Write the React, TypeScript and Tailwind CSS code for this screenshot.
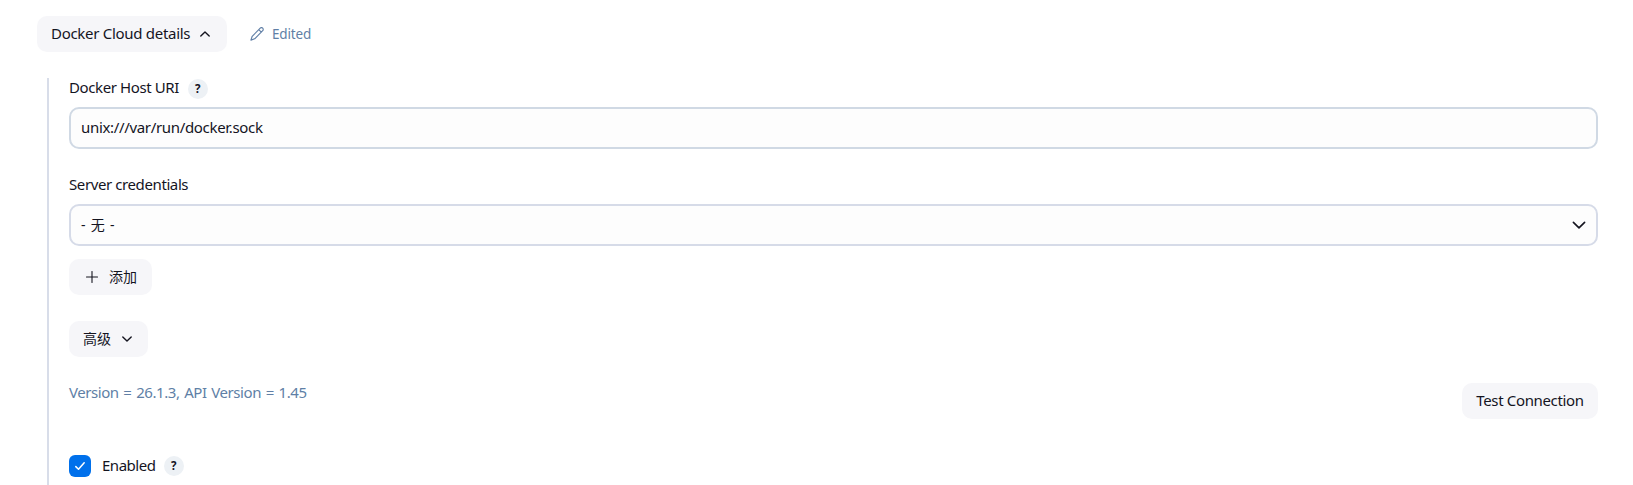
import React from "react";

const Chevron = ({ className, d }: { className: string; d: string }) => (
  <svg viewBox="0 0 12 12" className={className} fill="none" stroke="currentColor" strokeWidth="1.4" strokeLinecap="round" strokeLinejoin="round">
    <path d={d} />
  </svg>
);

const Help = ({ className }: { className: string }) => (
  <button className={`flex size-5 shrink-0 items-center justify-center rounded-full bg-[#edf1f5] pr-px text-[11.5px] leading-none font-bold ${className}`}>
    ?
  </button>
);

export default function App() {
  return (
    <main className="h-[485px] overflow-hidden bg-white pl-[37px] pr-[35px] pt-4 font-['Noto_Sans','Noto_Sans_CJK_SC',sans-serif] text-[15px] leading-5 tracking-[-0.4px] text-[#14141f]">
      <header className="flex h-9 items-center">
        <button className="flex h-9 w-[190px] items-center rounded-[10px] bg-[#f6f6f9] pl-[14px] whitespace-nowrap">
          <span className="w-[148px] pb-0.5 text-left tracking-[-0.29px]">Docker Cloud details</span>
          <Chevron className="size-3" d="M1.8 8 6 3.9 10.2 8" />
        </button>
        <div className="ml-[23px] flex items-center text-[#607fa6]">
          <svg viewBox="0 0 14 14" className="size-[14px]" fill="none" stroke="currentColor" strokeWidth="1.15" strokeLinecap="round" strokeLinejoin="round">
            <path d="M10.2 1.2a1.75 1.75 0 0 1 2.5 2.5L4.7 11.8.9 13.1 2.2 9.3zM8.8 2.7l2.5 2.5" />
          </svg>
          <span className="ml-2 text-[13.5px] tracking-[-0.15px]">Edited</span>
        </div>
      </header>

      <section className="ml-[10px] mt-[26px] h-[430px] border-l-2 border-[#d8dde9] pl-5">
        <div className="flex h-[29px] items-start">
          <label className="-mt-px w-[119px] whitespace-nowrap">Docker Host URI</label>
          <Help className="mt-px" />
        </div>
        <input
          defaultValue="unix:///var/run/docker.sock"
          className="block h-[42px] w-full rounded-[10px] border-2 border-[#d0d9e4] bg-[#fdfdfd] px-[10px] pb-0.5 tracking-[-0.33px] outline-none"
        />
        <label className="mt-[25px] block h-[30px]">Server credentials</label>
        <div className="flex h-[42px] items-center justify-between rounded-[10px] border-2 border-[#d6dbe8] bg-[#fdfdfd] pl-[10px] pr-[10px]">
          <span className="text-sm tracking-normal [word-spacing:1.6px]">- 无 -</span>
          <Chevron className="size-[14px]" d="M1.2 3.7 6 8.4 10.8 3.7" />
        </div>
        <button className="mt-[13px] flex h-9 w-[83px] items-center rounded-[10px] bg-[#f6f6f9] pl-[17px] text-sm tracking-normal">
          <svg viewBox="0 0 12 12" className="mr-[11px] size-3" fill="none" stroke="currentColor" strokeWidth="1.1" strokeLinecap="round">
            <path d="M6 .5v11M.5 6h11" />
          </svg>
          添加
        </button>
        <button className="mt-[26px] flex h-9 w-[79px] items-center rounded-[10px] bg-[#f6f6f9] pl-[14px] text-sm tracking-normal">
          高级
          <Chevron className="ml-[10px] size-3" d="M1.8 4 6 8.1 10.2 4" />
        </button>
        <div className="mt-[26px] flex items-start justify-between">
          <span className="-mt-px whitespace-nowrap tracking-[-0.45px] text-[#607fa6] [word-spacing:1.3px]">Version = 26.1.3, API Version = 1.45</span>
          <button className="h-9 w-[136px] rounded-[10px] bg-[#f6f6f9] pb-0.5 tracking-[-0.35px] whitespace-nowrap">Test Connection</button>
        </div>
        <div className="mt-9 flex h-[22px] items-center">
          <span role="checkbox" aria-checked="true" className="flex size-[22px] items-center justify-center rounded-md bg-[#0070eb]">
            <svg viewBox="0 0 12 12" className="size-3" fill="none" stroke="white" strokeWidth="1.5" strokeLinecap="round" strokeLinejoin="round">
              <path d="M1.8 6.6 4.5 9.3 10.2 2.7" />
            </svg>
          </span>
          <label className="ml-[11px] w-[62px] pb-0.5 tracking-[-0.48px]">Enabled</label>
          <Help className="" />
        </div>
      </section>
    </main>
  );
}
